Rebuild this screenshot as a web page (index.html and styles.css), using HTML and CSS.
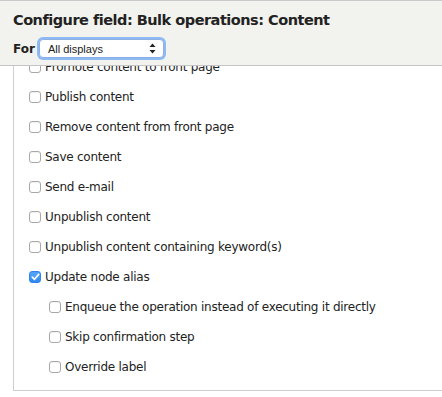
FILE: index.html
```html
<!DOCTYPE html>
<html lang="en">

<head>
  <meta charset="UTF-8">
  <title>Configure field</title>
  <link rel="stylesheet" href="styles.css">
</head>

<body>
  <div class="dialog">
    <div class="dialog-header">
      <h1>Configure field: Bulk operations: Content</h1>
      <div class="display-for">
        <span class="for-label">For</span>
        <div class="select">
          <span>All displays</span>
          <svg class="arrows" width="7" height="11" viewBox="0 0 7 11">
            <path d="M3.5 0.5 L6.5 4 L0.5 4 Z" fill="#222" />
            <path d="M3.5 10.5 L6.5 7 L0.5 7 Z" fill="#222" />
          </svg>
        </div>
      </div>
    </div>
    <div class="dialog-body">
      <div class="fieldset">
        <label class="option"><span class="box"></span>Promote content to front page</label>
        <label class="option"><span class="box"></span>Publish content</label>
        <label class="option"><span class="box"></span>Remove content from front page</label>
        <label class="option"><span class="box"></span>Save content</label>
        <label class="option"><span class="box"></span>Send e-mail</label>
        <label class="option"><span class="box"></span>Unpublish content</label>
        <label class="option"><span class="box"></span>Unpublish content containing keyword(s)</label>
        <label class="option"><span class="box checked"><svg width="9" height="8" viewBox="0 0 9 8">
              <path d="M1.3 4.2 L3.5 6.3 L7.7 1.4" fill="none" stroke="#fff" stroke-width="1.7" stroke-linecap="round" stroke-linejoin="round" />
            </svg></span>Update node alias</label>
        <div class="sub-options">
          <label class="option"><span class="box"></span>Enqueue the operation instead of executing it directly</label>
          <label class="option"><span class="box"></span>Skip confirmation step</label>
          <label class="option"><span class="box"></span>Override label</label>
        </div>
      </div>
    </div>
  </div>
</body>

</html>
```

FILE: styles.css
```css
* {
  box-sizing: border-box;
}

body {
  margin: 0;
  font-family: "DejaVu Sans", "Verdana", sans-serif;
  color: #222;
  background: #fff;
}

.dialog {
  height: 397px;
  overflow: hidden;
  border-top: 1px solid #c9c9c9;
}

.dialog-header {
  background-color: #f2f2ee;
  border-bottom: 1px solid #c4c4c4;
  padding: 9px 13px 0;
  height: 65px;
  position: relative;
  z-index: 1;
}

.dialog-header h1 {
  margin: 0;
  font-size: 14.5px;
  line-height: 20px;
  font-weight: bold;
  letter-spacing: -0.5px;
}

.display-for {
  display: flex;
  align-items: center;
  gap: 4px;
  margin-top: 9px;
}

.for-label {
  font-weight: bold;
  font-size: 12px;
}

.select {
  width: 125px;
  height: 19px;
  display: flex;
  align-items: center;
  justify-content: space-between;
  padding: 0 7px 0 8px;
  background: #fff;
  border: 1px solid #8fb0e4;
  border-radius: 4px;
  box-shadow: 0 0 0 2px #8dbaf3;
  font-family: "Liberation Sans", Arial, sans-serif;
  font-size: 11px;
}

.dialog-body {
  margin-top: -14px;
}

.fieldset {
  margin-left: 13px;
  width: 460px;
  border-left: 1px solid #cfcfcf;
  border-bottom: 1px solid #cfcfcf;
  padding: 0 0 8px 15px;
}

.option {
  display: flex;
  align-items: center;
  gap: 4px;
  height: 30px;
  font-size: 12px;
  letter-spacing: -0.25px;
}

.sub-options {
  padding-left: 20px;
}

.box {
  width: 12px;
  height: 12px;
  flex: none;
  border: 1px solid #a8a8a8;
  border-radius: 3px;
  background: #fff;
  box-shadow: inset 0 1px 1px rgba(0, 0, 0, 0.06);
  display: flex;
  align-items: center;
  justify-content: center;
}

.box.checked {
  border-color: #2f86f0;
  background: linear-gradient(#5aa9fb, #2f86f0);
}
```
